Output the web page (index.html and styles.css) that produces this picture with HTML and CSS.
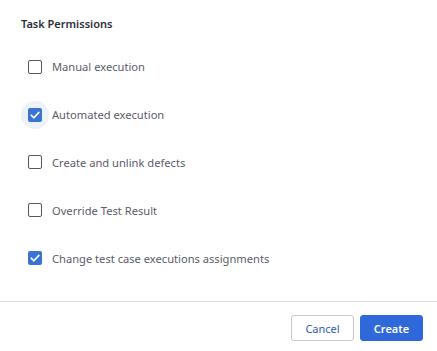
FILE: index.html
```html
<!DOCTYPE HTML>
<html>
<head>
	<title>Task Permissions</title>
	<meta name="viewport" content="width=device-width">
	<link rel="stylesheet" href="styles.css">
</head>
<body>
	<div class="content">
		<h3 class="title">Task Permissions</h3>
		<ul class="perms">
			<li class="perm"><span class="box"></span><span class="label">Manual execution</span></li>
			<li class="perm"><span class="box checked focus"><svg viewBox="0 0 14 14" width="14" height="14"><path d="M3.2 7.2 L5.9 9.8 L10.9 4.4" fill="none" stroke="white" stroke-width="1.6" stroke-linecap="round" stroke-linejoin="round"/></svg></span><span class="label">Automated execution</span></li>
			<li class="perm"><span class="box"></span><span class="label">Create and unlink defects</span></li>
			<li class="perm"><span class="box"></span><span class="label">Override Test Result</span></li>
			<li class="perm"><span class="box checked"><svg viewBox="0 0 14 14" width="14" height="14"><path d="M3.2 7.2 L5.9 9.8 L10.9 4.4" fill="none" stroke="white" stroke-width="1.6" stroke-linecap="round" stroke-linejoin="round"/></svg></span><span class="label">Change test case executions assignments</span></li>
		</ul>
	</div>
	<div class="footer">
		<button class="button bcancel">Cancel</button>
		<button class="button bmain">Create</button>
	</div>
</body>
</html>
```

FILE: styles.css
```css
/* font choice */
* {
	font-family: "Noto Sans", sans-serif;
	box-sizing: border-box;
}
body {
	margin: 0;
	background-color: white;
	width: 437px;
	height: 351px;
}
/* permissions list */
.content {
	padding: 16px 21px 0 21px;
	height: 301px;
}
.title {
	font-size: 11px;
	font-weight: 600;
	line-height: 16px;
	color: #2b2d3b;
	margin: 0;
}
.perms {
	list-style: none;
	margin: 11px 0 0 0;
	padding: 0;
}
.perm {
	height: 47.8px;
	display: flex;
	align-items: center;
	padding-left: 7px;
	isolation: isolate;
}
.box {
	position: relative;
	width: 14px;
	height: 14px;
	border: 1.5px solid #55575f;
	border-radius: 2px;
	display: flex;
	align-items: center;
	justify-content: center;
	flex-shrink: 0;
}
.box.checked {
	border: none;
	background-color: #3b72d6;
}
.box.focus::before {
	content: "";
	position: absolute;
	left: -7px;
	top: -7px;
	width: 28px;
	height: 28px;
	border-radius: 50%;
	background-color: #edf1fa;
	z-index: -1;
}
.label {
	margin-left: 10px;
	font-size: 11.15px;
	color: #5a5c68;
}
/* footer */
.footer {
	border-top: 1px solid #dcdde0;
	padding: 13px 14px 0 0;
	display: flex;
	justify-content: flex-end;
	gap: 6px;
}
.button {
	height: 26px;
	width: 63px;
	font-size: 11px;
	border-radius: 3px;
	border-style: solid;
	border-width: 1px;
	padding: 0;
}
.bcancel {
	background-color: white;
	border-color: #c6c8cd;
	color: #2f5cb8;
}
.bmain {
	background-color: #2f68d8;
	border-color: #2f68d8;
	color: white;
	font-weight: 600;
}
```
